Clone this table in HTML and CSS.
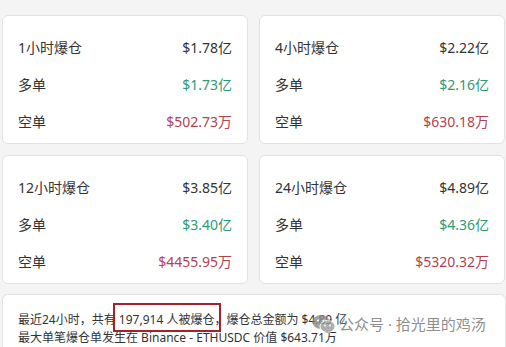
FILE: index.html
```html
<!DOCTYPE html>
<html lang="zh">
<head>
<meta charset="utf-8">
<link rel="stylesheet" href="styles.css">
</head>
<body>
<div class="page">
  <div class="grid">
    <div class="card">
      <div class="row"><span class="label">1小时爆仓</span><span class="val">$1.78亿</span></div>
      <div class="row"><span class="label">多单</span><span class="val up">$1.73亿</span></div>
      <div class="row"><span class="label">空单</span><span class="val down">$502.73万</span></div>
    </div>
    <div class="card">
      <div class="row"><span class="label">4小时爆仓</span><span class="val">$2.22亿</span></div>
      <div class="row"><span class="label">多单</span><span class="val up">$2.16亿</span></div>
      <div class="row"><span class="label">空单</span><span class="val down">$630.18万</span></div>
    </div>
    <div class="card">
      <div class="row"><span class="label">12小时爆仓</span><span class="val">$3.85亿</span></div>
      <div class="row"><span class="label">多单</span><span class="val up">$3.40亿</span></div>
      <div class="row"><span class="label">空单</span><span class="val down">$4455.95万</span></div>
    </div>
    <div class="card">
      <div class="row"><span class="label">24小时爆仓</span><span class="val">$4.89亿</span></div>
      <div class="row"><span class="label">多单</span><span class="val up">$4.36亿</span></div>
      <div class="row"><span class="label">空单</span><span class="val down">$5320.32万</span></div>
    </div>
  </div>
  <div class="summary">
    <p class="line">最近24小时，共有 <span class="hl">197,914 人被爆仓</span>，爆仓总金额为 $4.89 亿</p>
    <p class="line">最大单笔爆仓单发生在 Binance - ETHUSDC 价值 $643.71万</p>
    <div class="watermark">
      <svg class="wx" width="24" height="20" viewBox="0 0 24 20">
        <ellipse cx="9" cy="8" rx="8.5" ry="7" fill="#8a8a8a"/>
        <ellipse cx="15.5" cy="12.5" rx="7.5" ry="6" fill="#9a9a9a" stroke="#fff" stroke-width="1"/>
        <circle cx="6" cy="6.5" r="1.1" fill="#fff"/>
        <circle cx="11.5" cy="6.5" r="1.1" fill="#fff"/>
        <circle cx="13" cy="11.5" r="0.9" fill="#fff"/>
        <circle cx="18" cy="11.5" r="0.9" fill="#fff"/>
      </svg>
      <span>公众号 · 拾光里的鸡汤</span>
    </div>
  </div>
</div>
</body>
</html>
```

FILE: styles.css
```css
html, body {
  margin: 0;
  padding: 0;
  background: #f4f4f4;
}
body {
  font-family: "Noto Sans", "Noto Sans CJK SC", sans-serif;
  color: #333;
  width: 506px;
  height: 347px;
  overflow: hidden;
}
.page {
  padding: 15px 0 0 2px;
}
.grid {
  display: grid;
  grid-template-columns: 246px 246px;
  column-gap: 11px;
  row-gap: 11px;
}
.card {
  background: #fff;
  border: 1px solid #e2e2e2;
  border-radius: 6px;
  padding: 12px 15px 4px;
  height: 111px;
}
.row {
  display: flex;
  justify-content: space-between;
  align-items: center;
  height: 37px;
  font-size: 14px;
}
.label {
  color: #333;
}
.val {
  color: #333;
}
.val.up {
  color: #2e9a76;
}
.val.down {
  color: #b3424f;
}
.summary {
  position: relative;
  margin-top: 10px;
  background: #fff;
  border: 1px solid #e2e2e2;
  border-bottom: none;
  border-radius: 6px 6px 0 0;
  padding: 16px 15px 0;
  height: 36px;
}
.line {
  margin: 0;
  font-size: 12px;
  line-height: 18px;
  color: #333;
  white-space: nowrap;
}
.hl {
  position: relative;
}
.hl::before {
  content: "";
  position: absolute;
  left: -6px;
  right: -7px;
  top: -8px;
  bottom: -4px;
  border: 2px solid #a3222b;
}
.watermark {
  position: absolute;
  left: 309px;
  top: 18px;
  display: flex;
  align-items: center;
  gap: 3px;
  color: rgba(120, 120, 120, 0.85);
  font-size: 15px;
}
.wx {
  opacity: 0.8;
}
```
